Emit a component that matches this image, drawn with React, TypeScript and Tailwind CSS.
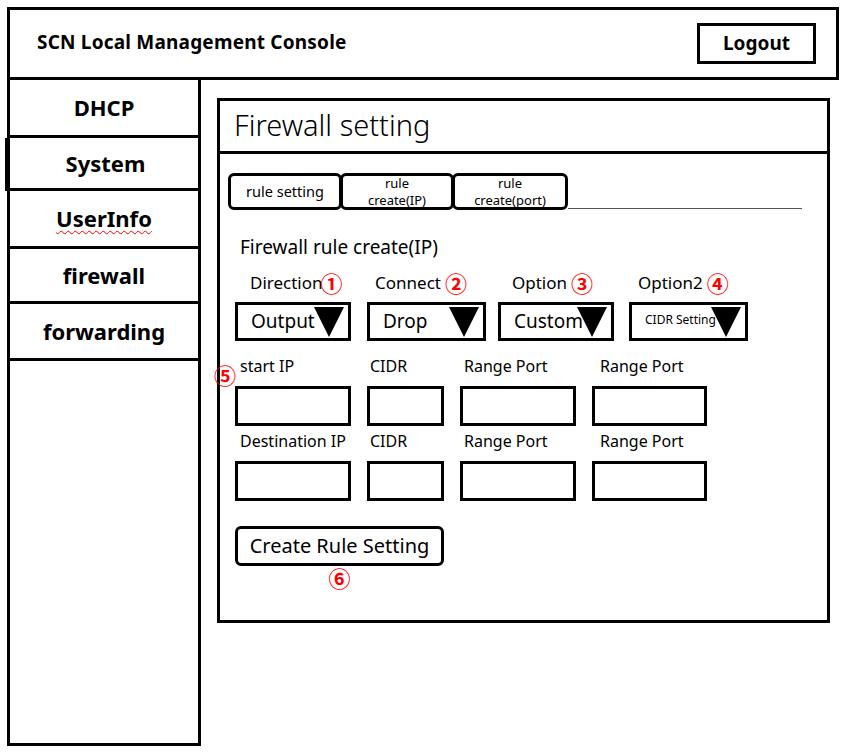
import React from 'react';

const font = { fontFamily: '"Noto Sans", "Noto Sans CJK KR", sans-serif' };

const Mark: React.FC<{ n: string; className?: string }> = ({ n, className = '' }) => (
  <span className={`text-[22px] leading-none font-bold text-[#ff0000] ${className}`} style={{ fontFamily: '"Noto Sans CJK KR", sans-serif' }}>
    {n}
  </span>
);

const Select: React.FC<{ value: string; w: string; small?: boolean }> = ({ value, w, small }) => (
  <div className={`${w} h-[39px] border-[3px] border-black flex items-center relative`}>
    <span className={small ? 'pl-[13px] text-[12px] -mt-[4px]' : 'pl-[13px] text-[19px]'}>{value}</span>
    <svg className="absolute right-[4px] top-[2px]" width="30" height="30" viewBox="0 0 30 30">
      <polygon points="0,0 30,0 15,30" fill="black" />
    </svg>
  </div>
);

const Field: React.FC<{ w: string }> = ({ w }) => <div className={`${w} h-[40px] border-[3px] border-black`} />;

const Label: React.FC<{ w: string; text: string; pl?: string }> = ({ w, text, pl = 'pl-[4px]' }) => (
  <div className={`${w} ${pl} text-[16px] leading-none`}>{text}</div>
);

export default function App() {
  const menu = [
    { label: 'DHCP', h: 'h-[58px]' },
    { label: 'System', h: 'h-[53px]', shift: true },
    { label: 'UserInfo', h: 'h-[58px]', squiggle: true },
    { label: 'firewall', h: 'h-[55px]' },
    { label: 'forwarding', h: 'h-[57px]' },
  ];

  return (
    <div className="w-[842px] h-[753px] bg-white text-black pt-[7px] pl-[7px]" style={font}>
      <div className="w-[832px] h-[73px] border-[3px] border-black flex items-center justify-between pl-[27px] pr-[20px]">
        <span className="text-[19px] tracking-[0.2px] font-bold -mt-[3px]">SCN Local Management Console</span>
        <div className="w-[119px] h-[41px] border-[3px] border-black flex items-center justify-center text-[19px] font-bold">
          Logout
        </div>
      </div>

      <div className="flex">
        <div className="w-[194px] h-[666px] border-x-[3px] border-b-[3px] border-black">
          {menu.map((m) => (
            <div
              key={m.label}
              className={`${m.h} border-b-[3px] border-black flex items-center justify-center text-[22px] font-bold ${
                m.shift ? 'border-l-[3px] -ml-[5px] pl-[5px]' : ''
              }`}
            >
              <span className={m.squiggle ? 'underline decoration-wavy decoration-[#ff0000] decoration-1 underline-offset-[3px]' : ''}>
                {m.label}
              </span>
            </div>
          ))}
        </div>

        <div className="ml-[16px] mt-[18px] w-[613px] h-[525px] border-[3px] border-black">
          <div className="h-[53px] border-b-[3px] border-black flex items-center pl-[14px] text-[29px] font-light">
            <span className="-mt-[3px]">Firewall setting</span>
          </div>

          <div className="pl-[8px] pt-[19px] relative">
            <div className="flex items-end">
              <div className="w-[114px] h-[37px] border-[3px] border-black rounded-[6px] flex items-center justify-center text-[14.5px]">
                rule setting
              </div>
              <div className="w-[114px] h-[37px] -ml-[2px] border-[3px] border-black rounded-[6px] flex flex-col items-center justify-center text-[13px] leading-[17px]">
                <span>rule</span>
                <span>create(IP)</span>
              </div>
              <div className="w-[116px] h-[37px] -ml-[2px] border-[3px] border-black rounded-[6px] flex flex-col items-center justify-center text-[13px] leading-[17px]">
                <span>rule</span>
                <span>create(port)</span>
              </div>
              <div className="w-[234px] h-[1px] bg-[#555] mb-[1px]" />
            </div>

            <div className="pl-[12px] mt-[28px] text-[19px] leading-none">Firewall rule create(IP)</div>

            <div className="flex mt-[13px] pl-[8px] text-[17px] leading-none items-center h-[24px]">
              <div className="w-[132px] pl-[14px] flex items-center">
                Direction<Mark n="①" className="-ml-[2px]" />
              </div>
              <div className="w-[131px] pl-[7px] flex items-center gap-[4px]">
                Connect<Mark n="②" />
              </div>
              <div className="w-[131px] pl-[13px] flex items-center gap-[4px]">
                Option<Mark n="③" />
              </div>
              <div className="w-[118px] pl-[8px] flex items-center gap-[4px]">
                Option2<Mark n="④" />
              </div>
            </div>

            <div className="flex mt-[8px] pl-[7px]">
              <Select value="Output" w="w-[116px]" />
              <div className="ml-[16px]">
                <Select value="Drop" w="w-[119px]" />
              </div>
              <div className="ml-[12px]">
                <Select value="Custom" w="w-[116px]" />
              </div>
              <div className="ml-[15px]">
                <Select value="CIDR Setting" w="w-[119px]" small />
              </div>
            </div>

            <Mark n="⑤" className="absolute left-[-6px] top-[209px]" />

            <div className="flex mt-[17px] pl-[7px]">
              <Label w="w-[132px]" text="start IP" pl="pl-[5px]" />
              <Label w="w-[93px]" text="CIDR" pl="pl-[3px]" />
              <Label w="w-[132px]" text="Range Port" />
              <Label w="w-[115px]" text="Range Port" pl="pl-[8px]" />
            </div>
            <div className="flex mt-[12px] pl-[7px] gap-[16px]">
              <Field w="w-[116px]" />
              <Field w="w-[77px]" />
              <Field w="w-[116px]" />
              <Field w="w-[115px]" />
            </div>

            <div className="flex mt-[7px] pl-[7px]">
              <Label w="w-[132px]" text="Destination IP" pl="pl-[5px]" />
              <Label w="w-[93px]" text="CIDR" pl="pl-[3px]" />
              <Label w="w-[132px]" text="Range Port" />
              <Label w="w-[115px]" text="Range Port" pl="pl-[8px]" />
            </div>
            <div className="flex mt-[12px] pl-[7px] gap-[16px]">
              <Field w="w-[116px]" />
              <Field w="w-[77px]" />
              <Field w="w-[116px]" />
              <Field w="w-[115px]" />
            </div>

            <div className="pl-[7px] mt-[25px] w-[216px] flex flex-col items-center">
              <div className="w-[209px] h-[40px] border-[3px] border-black rounded-[6px] flex items-center justify-center text-[20px]">
                Create Rule Setting
              </div>
              <Mark n="⑥" className="mt-[0px]" />
            </div>
          </div>
        </div>
      </div>
    </div>
  );
}
